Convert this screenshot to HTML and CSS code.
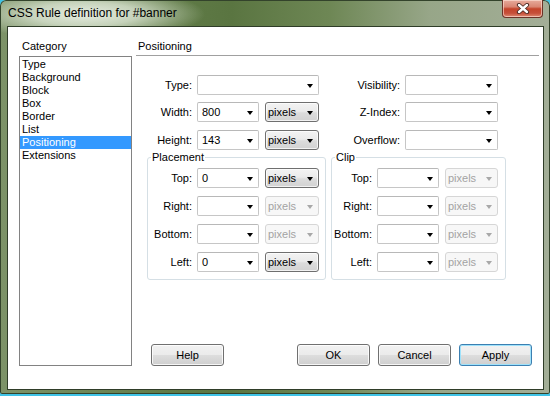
FILE: index.html
```html
<!DOCTYPE html>
<html lang="en">
<head>
    <meta charset="UTF-8">
    <title>CSS Rule definition for #banner</title>
    <link rel="stylesheet" href="styles.css">
</head>
<body>
    <div class="window">
        <header class="titlebar">
            <span class="title">CSS Rule definition for #banner</span>
            <button class="close" aria-label="Close">
                <svg width="14" height="11" viewBox="0 0 14 11">
                    <path d="M3 2 L11 9 M11 2 L3 9" stroke="#4a2a24" stroke-width="4.2" stroke-linecap="round"/>
                    <path d="M3 2 L11 9 M11 2 L3 9" stroke="#ffffff" stroke-width="2.4" stroke-linecap="round"/>
                </svg>
            </button>
        </header>

        <div class="client">
            <!-- Category list -->
            <div class="categories">
                <div class="caption">Category</div>
                <ul class="listbox">
                    <li>Type</li>
                    <li>Background</li>
                    <li>Block</li>
                    <li>Box</li>
                    <li>Border</li>
                    <li>List</li>
                    <li class="selected">Positioning</li>
                    <li>Extensions</li>
                </ul>
            </div>

            <!-- Positioning panel -->
            <section class="panel">
                <h2 class="panel-title">Positioning</h2>

                <div class="top-grid">
                    <label>Type:</label>
                    <div class="combo wide"></div>
                    <label>Visibility:</label>
                    <div class="combo long"></div>

                    <label>Width:</label>
                    <div class="combo">800</div>
                    <div class="unit">pixels</div>
                    <label>Z-Index:</label>
                    <div class="combo long"></div>

                    <label>Height:</label>
                    <div class="combo">143</div>
                    <div class="unit">pixels</div>
                    <label>Overflow:</label>
                    <div class="combo long"></div>
                </div>

                <div class="groups">
                    <fieldset class="group placement">
                        <legend>Placement</legend>
                        <div class="group-grid">
                            <label>Top:</label>
                            <div class="combo">0</div>
                            <div class="unit">pixels</div>

                            <label>Right:</label>
                            <div class="combo"></div>
                            <div class="unit off">pixels</div>

                            <label>Bottom:</label>
                            <div class="combo"></div>
                            <div class="unit off">pixels</div>

                            <label>Left:</label>
                            <div class="combo">0</div>
                            <div class="unit">pixels</div>
                        </div>
                    </fieldset>

                    <fieldset class="group clip">
                        <legend>Clip</legend>
                        <div class="group-grid">
                            <label>Top:</label>
                            <div class="combo"></div>
                            <div class="unit off">pixels</div>

                            <label>Right:</label>
                            <div class="combo"></div>
                            <div class="unit off">pixels</div>

                            <label>Bottom:</label>
                            <div class="combo"></div>
                            <div class="unit off">pixels</div>

                            <label>Left:</label>
                            <div class="combo"></div>
                            <div class="unit off">pixels</div>
                        </div>
                    </fieldset>
                </div>

                <div class="buttons">
                    <button class="btn help">Help</button>
                    <button class="btn ok">OK</button>
                    <button class="btn">Cancel</button>
                    <button class="btn default">Apply</button>
                </div>
            </section>
        </div>
    </div>
</body>
</html>
```

FILE: styles.css
```css
* {
    margin: 0;
    padding: 0;
    box-sizing: border-box;
}

body {
    width: 550px;
    height: 396px;
    overflow: hidden;
    background: #3fc3e6;
    font-family: 'Liberation Sans', Arial, sans-serif;
    font-size: 11px;
    color: #000;
}

/* Window frame */
.window {
    height: 394px;
    padding: 0 6px 4px 7px;
    border-radius: 6px 6px 2px 2px;
    background:
        radial-gradient(ellipse 120px 26px at 85px 14px, rgba(236,242,232,0.95) 0%, rgba(220,230,212,0.8) 45%, rgba(160,180,140,0) 100%),
        linear-gradient(to right, #7d9368 0%, #5f7a46 32%, #5a7541 42%, #6e8755 60%, #97a688 78%, #a3ae97 100%);
    box-shadow: inset 0 0 0 1px #33432b;
}

.titlebar {
    height: 26px;
    display: flex;
    justify-content: space-between;
    align-items: flex-start;
    padding-left: 1px;
}

.title {
    padding-top: 6px;
    font-size: 12px;
    line-height: 14px;
    color: #000;
}

.close {
    width: 41px;
    height: 18px;
    margin-right: 1px;
    border: 1px solid #6b3328;
    border-top: none;
    border-radius: 0 0 4px 4px;
    background: linear-gradient(180deg, #e7ab9c 0%, #d98673 40%, #c4442b 52%, #c6503a 78%, #de8b73 100%);
    box-shadow: inset 0 0 0 1px rgba(255,230,220,0.6);
    display: flex;
    align-items: center;
    justify-content: center;
}

/* Client area */
.client {
    height: 364px;
    display: flex;
    gap: 4px;
    padding: 13px 4px 23px 11px;
    background: #fff;
    border: 1px solid #2f3d28;
}

.categories {
    width: 113px;
    display: flex;
    flex-direction: column;
}

.caption {
    line-height: 13px;
    padding-left: 3px;
    margin-bottom: 3px;
}

.listbox {
    flex: 1;
    list-style: none;
    border: 1px solid #828282;
    padding-top: 1px;
}

.listbox li {
    line-height: 13px;
    padding-left: 2px;
}

.listbox li.selected {
    background: #3399ff;
    color: #fff;
}

/* Right panel */
.panel {
    flex: 1;
    display: flex;
    flex-direction: column;
}

.panel-title {
    font-size: 11px;
    font-weight: normal;
    line-height: 13px;
    padding: 0 0 2px 2px;
    border-bottom: 1px solid #a0a0a0;
    margin-bottom: 19px;
}

.top-grid {
    display: grid;
    grid-template-columns: 61px 68px 54px 86px 93px;
    grid-template-rows: 27px 28px 20px;
    align-items: start;
}

label {
    height: 20px;
    line-height: 20px;
    text-align: right;
    padding-right: 5px;
    white-space: nowrap;
}

/* Drop-down boxes */
.combo,
.unit {
    position: relative;
    height: 20px;
    line-height: 18px;
    border-radius: 2px;
}

.combo {
    width: 62px;
    padding-left: 4px;
    background: #fff;
    border: 1px solid #c6c6c6;
    border-top-color: #b8b8b8;
}

.combo.wide {
    grid-column: span 2;
    width: 122px;
}

.combo.long {
    width: 93px;
}

.unit {
    width: 54px;
    padding-left: 2px;
    border: 1px solid #6f6f6f;
    border-radius: 3px;
    background: linear-gradient(180deg, #f3f3f3 0%, #ebebeb 45%, #dcdcdc 55%, #d2d2d2 100%);
    box-shadow: inset 0 0 0 1px rgba(255,255,255,0.7);
}

.unit.off {
    color: #a3a3a3;
    border-color: #d6d6d6;
    background: #f7f7f7;
    box-shadow: none;
}

.combo::after,
.unit::after {
    content: '';
    position: absolute;
    right: 5px;
    top: 8px;
    border-style: solid;
    border-width: 4px 3.5px 0;
    border-color: #000 transparent transparent;
}

.unit.off::after {
    border-top-color: #a8a8a8;
}

/* Placement / Clip groups */
.groups {
    display: flex;
    gap: 5px;
    margin: 1px 0 0 11px;
}

.group {
    border: 1px solid #d5dfe5;
    border-radius: 3px;
    padding: 4px 0 7px;
    min-width: 0;
}

.group legend {
    line-height: 13px;
    padding: 0 1px;
    margin-left: 3px;
}

.placement {
    width: 179px;
}

.clip {
    width: 175px;
}

.group-grid {
    display: grid;
    row-gap: 8px;
    grid-auto-rows: 20px;
}

.placement .group-grid {
    grid-template-columns: 49px 68px 54px;
}

.clip .group-grid {
    grid-template-columns: 45px 68px 53px;
}

.clip .unit {
    width: 53px;
}

/* Buttons */
.buttons {
    margin-top: auto;
    display: flex;
    gap: 8px;
    padding: 0 7px 0 15px;
}

.btn {
    width: 73px;
    height: 22px;
    font-family: inherit;
    font-size: 11px;
    color: #000;
    border: 1px solid #707070;
    border-radius: 3px;
    background: linear-gradient(180deg, #f2f2f2 0%, #ebebeb 48%, #dddddd 52%, #cfcfcf 100%);
    box-shadow: inset 0 0 0 1px rgba(255,255,255,0.8);
}

.btn.ok {
    margin-left: auto;
}

.btn.default {
    border-color: #3c7fb1;
    box-shadow: inset 0 0 0 1px #9fe2fb;
}
```
